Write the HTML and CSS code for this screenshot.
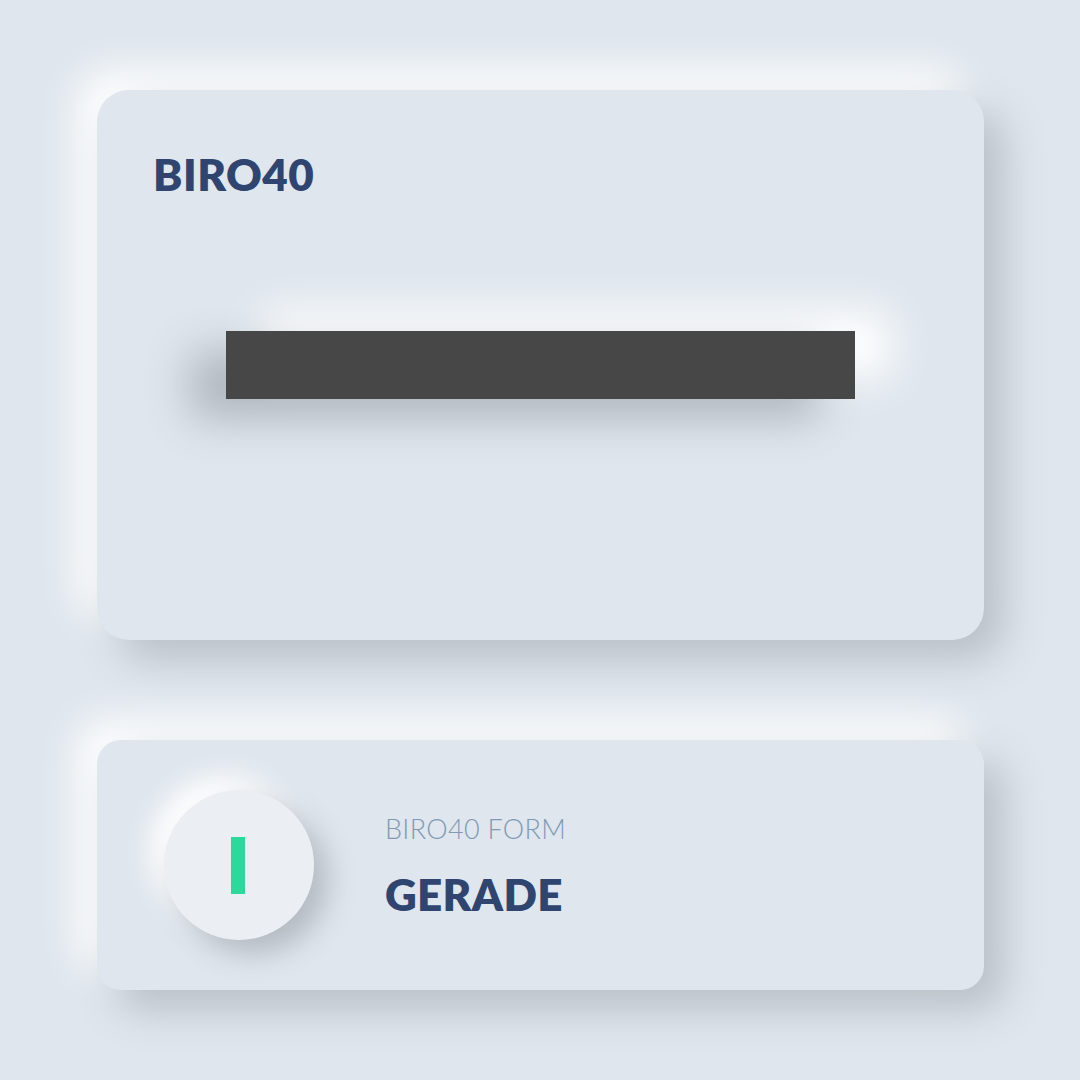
FILE: index.html
```html
<!DOCTYPE html>
<html lang="de">
<head>
<meta charset="utf-8">
<title>BIRO40</title>
<link rel="stylesheet" href="styles.css">
</head>
<body>
<main class="page">
  <section class="card card-main">
    <h1 class="title">BIRO40</h1>
    <div class="bar-wrap">
      <div class="bar"></div>
    </div>
  </section>
  <section class="card card-info">
    <div class="knob"><span class="knob-line"></span></div>
    <div class="info">
      <div class="info-label">BIRO40 FORM</div>
      <div class="info-value">GERADE</div>
    </div>
  </section>
</main>
</body>
</html>
```
FILE: styles.css
```css
html, body {
  margin: 0;
  padding: 0;
  background: #dfe6ed;
}
body {
  width: 1080px;
  height: 1080px;
  overflow: hidden;
  font-family: "Lato", "Noto Sans", sans-serif;
}
.page {
  padding: 90px 0 0 97px;
  display: flex;
  flex-direction: column;
  gap: 100px;
  width: 887px;
}
.card {
  background: #dfe6ed;
  box-shadow: 20px 20px 40px #b9c0c7, -20px -20px 40px #ffffff;
}
.card-main {
  height: 550px;
  border-radius: 32px;
  box-sizing: border-box;
  padding: 56px 0 0 56px;
}
.title {
  margin: 0;
  font-size: 44px;
  line-height: 56px;
  font-weight: 800;
  color: #2f4570;
  letter-spacing: 0.5px;
}
.bar-wrap {
  padding: 129px 0 0 73px;
}
.bar {
  width: 629px;
  height: 68px;
  background: #474747;
  box-shadow: -36px 20px 44px #b0b7be, 36px -20px 44px #ffffff;
}
.card-info {
  height: 250px;
  border-radius: 24px;
  display: flex;
  align-items: center;
  padding-left: 67px;
  gap: 71px;
}
.knob {
  width: 150px;
  height: 150px;
  border-radius: 50%;
  background: #ebeff3;
  box-shadow: 14px 14px 28px #b4bbc2, -14px -14px 28px #ffffff;
  display: flex;
  align-items: center;
  justify-content: center;
}
.knob-line {
  width: 14px;
  height: 57px;
  background: #2bd99a;
  margin-left: -2px;
}
.info {
  display: flex;
  flex-direction: column;
  gap: 26px;
  margin-top: 2px;
}
.info-label {
  font-size: 27px;
  line-height: 30px;
  font-weight: 300;
  color: #7f9ab5;
  letter-spacing: 0.3px;
}
.info-value {
  font-size: 44px;
  line-height: 48px;
  font-weight: 800;
  color: #2f4570;
  letter-spacing: 0.3px;
}
```
